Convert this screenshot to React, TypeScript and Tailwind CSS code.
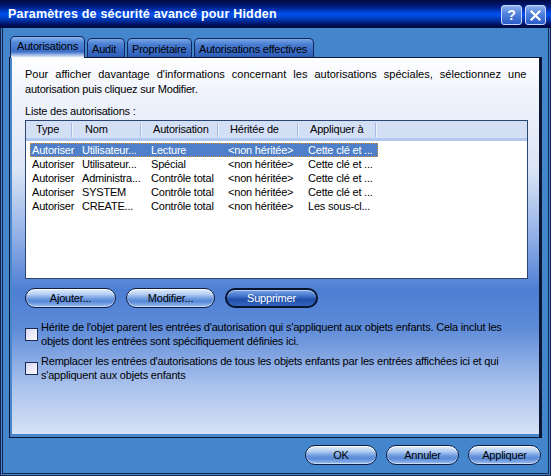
import React from "react";

const rows = [
  ["Autoriser", "Utilisateur...", "Lecture", "<non héritée>", "Cette clé et ..."],
  ["Autoriser", "Utilisateur...", "Spécial", "<non héritée>", "Cette clé et ..."],
  ["Autoriser", "Administra...", "Contrôle total", "<non héritée>", "Cette clé et ..."],
  ["Autoriser", "SYSTEM", "Contrôle total", "<non héritée>", "Cette clé et ..."],
  ["Autoriser", "CREATE...", "Contrôle total", "<non héritée>", "Les sous-cl..."],
];

function PillButton({ label, w, primary }: { label: string; w: string; primary?: boolean }) {
  if (primary) {
    return (
      <div
        className={`${w} h-[20px] rounded-full border-2 border-[#08142e] bg-[linear-gradient(to_bottom,#7ea6e8_0%,#3f70c8_40%,#1f4fa8_60%,#3566bf_100%)] shadow-[inset_0_1px_0_#b8d0f6] flex items-center justify-center text-white text-[11px] leading-none`}
      >
        {label}
      </div>
    );
  }
  return (
    <div
      className={`${w} h-[20px] rounded-full border border-[#0d1d46] bg-[linear-gradient(to_bottom,#e4eefc_0%,#b3cdf3_30%,#6a98de_55%,#5a8ad6_70%,#9dbdf0_100%)] shadow-[inset_0_1px_0_#ffffff,inset_0_-1px_0_#c8dcf8] flex items-center justify-center text-black text-[11px] leading-none`}
    >
      {label}
    </div>
  );
}

function Tab({ label, w, active }: { label: string; w: string; active?: boolean }) {
  if (active) {
    return (
      <div
        className={`${w} h-[22px] -mb-px relative z-10 rounded-t-[5px] border border-b-0 border-[#12275a] bg-[linear-gradient(to_bottom,#8fb6ee_0%,#5388d8_25%,#3a6ec8_70%,#ffffff_100%)] flex items-start pl-[6px] pt-[3px] text-[11px] text-black leading-[13px]`}
      >
        {label}
      </div>
    );
  }
  return (
    <div
      className={`${w} h-[19px] rounded-t-[5px] border border-b-0 border-[#12275a] bg-[linear-gradient(to_bottom,#7aa6e8_0%,#4a7ed2_30%,#2c5cb8_100%)] flex items-start pl-[4px] pt-[4px] text-[11px] text-black leading-[13px]`}
    >
      {label}
    </div>
  );
}

function Checkbox() {
  return (
    <div className="w-[13px] h-[13px] shrink-0 border border-[#1a2b58] bg-[linear-gradient(135deg,#d6d6ee_0%,#eeeefa_60%,#fafaff_100%)]" />
  );
}

export default function App() {
  return (
    <div className="w-[551px] h-[476px] flex flex-col bg-[#4486cc] font-['Liberation_Sans',Arial,sans-serif] text-[11px] tracking-[-0.2px] text-black overflow-hidden">
      {/* Title bar */}
      <div className="h-[28px] shrink-0 flex items-center bg-[linear-gradient(to_bottom,#000a40_0%,#001a78_22%,#0046dc_45%,#0050f0_52%,#0036b0_70%,#001060_88%,#000838_100%)] pl-[8px] pr-[5px]">
        <div className="flex-1 text-white font-bold text-[12.5px] tracking-[0.2px]">
          Paramètres de sécurité avancé pour Hidden
        </div>
        <div className="flex gap-[3px] mt-[2px]">
          <div className="w-[21px] h-[20px] rounded-[3px] border border-[#c8d8f8] bg-[linear-gradient(to_bottom,#8cb0f0_0%,#4f80dc_45%,#2a5cc8_100%)] flex items-center justify-center text-white font-bold text-[14px] leading-none">
            ?
          </div>
          <div className="w-[21px] h-[20px] rounded-[3px] border border-[#c8d8f8] bg-[linear-gradient(to_bottom,#8cb0f0_0%,#4f80dc_45%,#2a5cc8_100%)] flex items-center justify-center">
            <svg width="11" height="11" viewBox="0 0 11 11">
              <path d="M1.5 1.5 L9.5 9.5 M9.5 1.5 L1.5 9.5" stroke="#ffffff" strokeWidth="2.2" strokeLinecap="square" />
            </svg>
          </div>
        </div>
      </div>

      {/* Window frame */}
      <div className="flex-1 flex flex-col border-x border-b border-[#14264e]">
        <div className="flex-1 flex flex-col mx-[1px] mb-[1px] border-x border-b border-[#14264e] pl-[6px] pr-[6px]">
          {/* Tabs */}
          <div className="flex items-end gap-[2px] pl-[1px] mt-[8px] h-[21px]">
            <Tab label="Autorisations" w="w-[75px]" active />
            <Tab label="Audit" w="w-[38px]" />
            <Tab label="Propriétaire" w="w-[65px]" />
            <Tab label="Autorisations effectives" w="w-[120px]" />
          </div>

          {/* Panel */}
          <div className="h-[381px] w-[533px] border border-r-[3px] border-[#0b1634] flex flex-col">
            <div className="flex-1 flex flex-col border-l-[2px] border-b-[3px] border-[#4a86cc] bg-[linear-gradient(to_bottom,#ffffff_0%,#f2f5fc_8%,#dbe4f6_30%,#8eaee6_48%,#4c7ed2_62%,#5f8cd8_72%,#a9c1ec_87%,#d6e2f5_100%)] pl-[13px] pr-[9px]">
              <div className="pt-[9px] leading-[15px] whitespace-nowrap">
                <div className="tracking-[0px] [word-spacing:4px]">Pour afficher davantage d&apos;informations concernant les autorisations spéciales, sélectionnez une</div>
                <div>autorisation puis cliquez sur Modifier.</div>
              </div>
              <div className="mt-[8px] leading-[13px]">Liste des autorisations :</div>

              {/* List */}
              <div className="mt-[2px] h-[159px] w-[503px] border border-[#2b4572] bg-white flex flex-col">
                <div className="h-[20px] flex bg-[#d3dff5] border-b-[3px] border-[#b3c8ee] text-black">
                  {[
                    ["Type", "w-[47px] pl-[10px]"],
                    ["Nom", "w-[69px] pl-[12px]"],
                    ["Autorisation", "w-[77px] pl-[11px]"],
                    ["Héritée de", "w-[80px] pl-[11px]"],
                    ["Appliquer à", "w-[78px] pl-[11px]"],
                  ].map(([t, c]) => (
                    <div key={t} className={`${c} flex items-center justify-between`}>
                      <span className="leading-[13px]">{t}</span>
                      <span className="w-[2px] h-[14px] border-l border-[#a6b9df] bg-white/60" />
                    </div>
                  ))}
                </div>
                <div className="pt-[2px] flex flex-col">
                  {rows.map((r, i) => (
                    <div
                      key={i}
                      className={`ml-[4px] w-[348px] h-[14px] flex items-center leading-[13px] whitespace-nowrap ${
                        i === 0 ? "bg-[#4e7fc8] text-white outline-1 outline-dotted outline-[#d08a3c] -outline-offset-1" : "text-black"
                      }`}
                    >
                      <div className="w-[43px] pl-[2px]">{r[0]}</div>
                      <div className="w-[69px] pl-[9px]">{r[1]}</div>
                      <div className="w-[77px] pl-[9px]">{r[2]}</div>
                      <div className="w-[80px] pl-[9px]">{r[3]}</div>
                      <div className="w-[79px] pl-[9px]">{r[4]}</div>
                    </div>
                  ))}
                </div>
              </div>

              {/* Buttons */}
              <div className="mt-[9px] flex gap-[10px]">
                <PillButton label="Ajouter..." w="w-[91px]" />
                <PillButton label="Modifier..." w="w-[89px]" />
                <PillButton label="Supprimer" w="w-[93px]" primary />
              </div>

              {/* Checkboxes */}
              <div className="mt-[12px] flex items-center gap-[3px]">
                <Checkbox />
                <div className="leading-[14px] whitespace-nowrap">
                  <div>Hérite de l&apos;objet parent les entrées d&apos;autorisation qui s&apos;appliquent aux objets enfants. Cela inclut les</div>
                  <div>objets dont les entrées sont spécifiquement définies ici.</div>
                </div>
              </div>
              <div className="mt-[6px] flex items-center gap-[3px]">
                <Checkbox />
                <div className="leading-[14px] whitespace-nowrap">
                  <div>Remplacer les entrées d&apos;autorisations de tous les objets enfants par les entrées affichées ici et qui</div>
                  <div>s&apos;appliquent aux objets enfants</div>
                </div>
              </div>
            </div>
          </div>

          {/* Bottom buttons */}
          <div className="mt-[7px] flex justify-end gap-[9px] pr-[1px]">
            <PillButton label="OK" w="w-[72px]" />
            <PillButton label="Annuler" w="w-[73px]" />
            <PillButton label="Appliquer" w="w-[73px]" />
          </div>
        </div>
      </div>
    </div>
  );
}
